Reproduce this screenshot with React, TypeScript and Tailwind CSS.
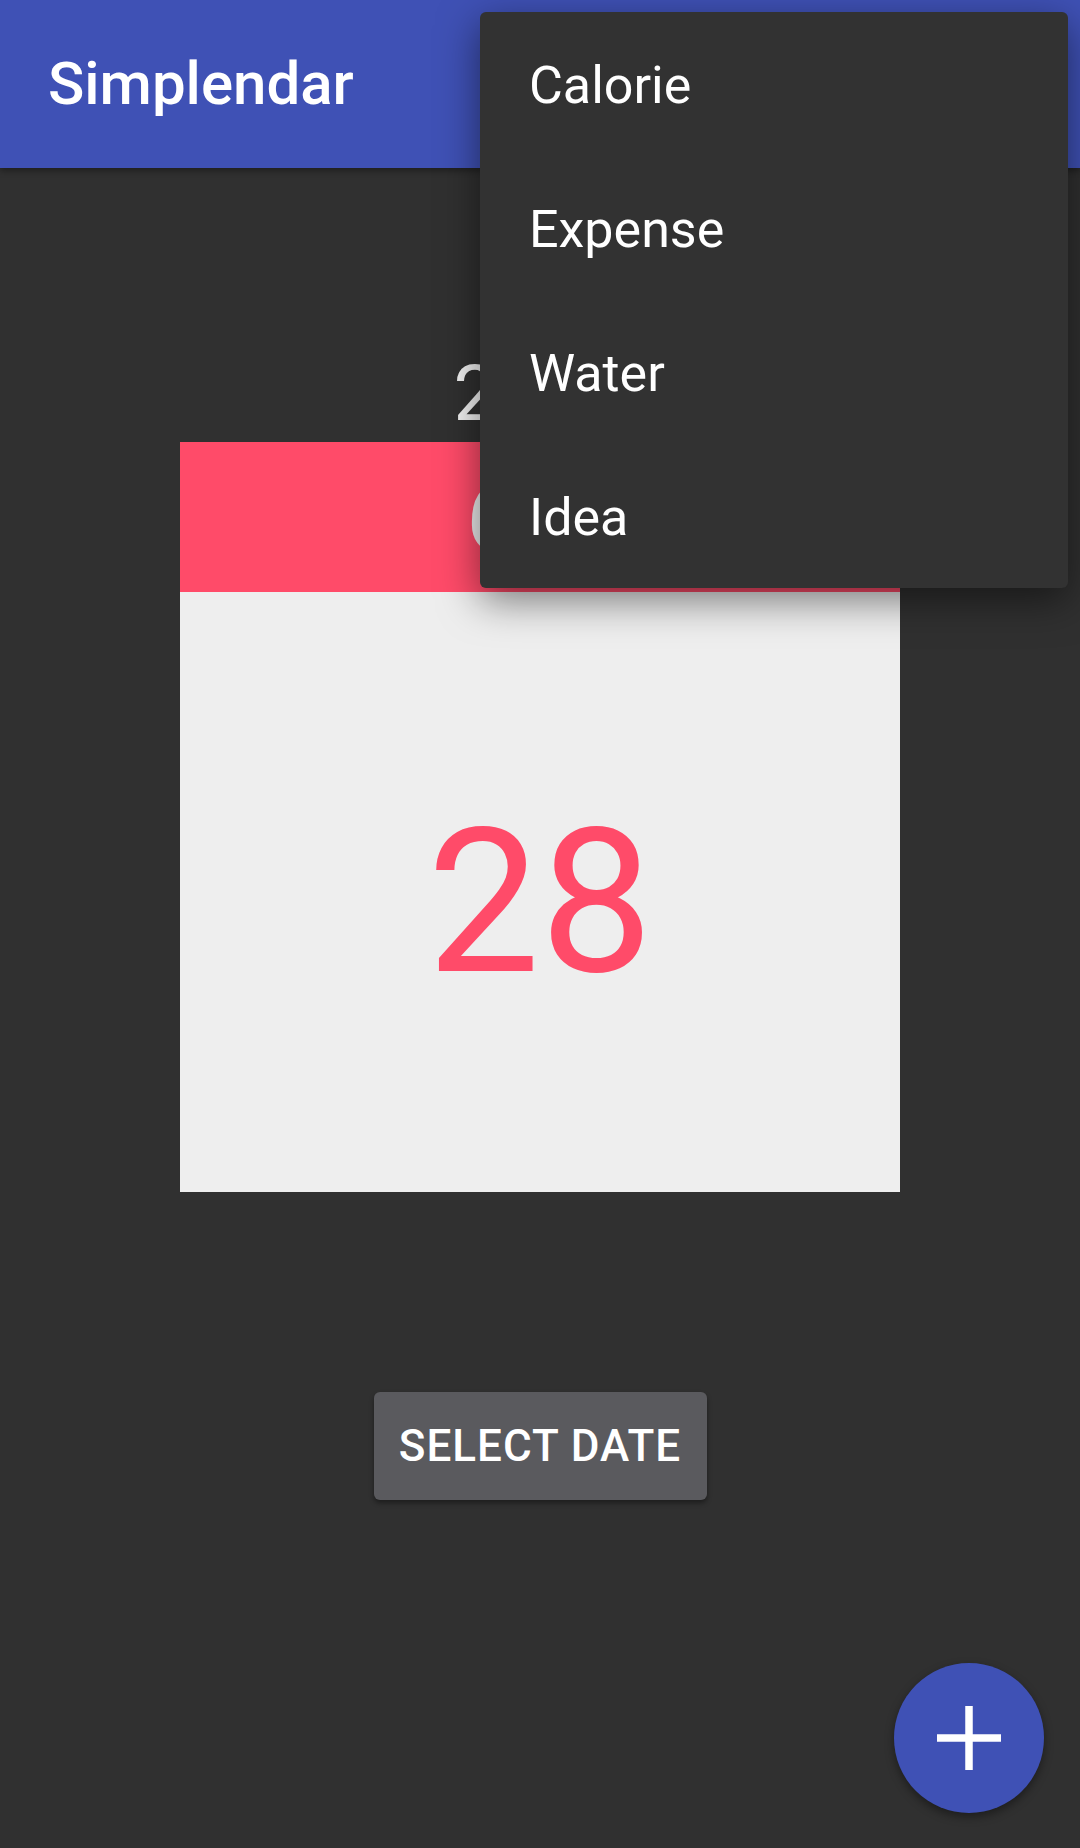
import React from 'react';

const menuItems = ['Calorie', 'Expense', 'Water', 'Idea'];

const PlusIcon: React.FC = () => (
  <svg width="66" height="66" viewBox="0 0 66 66" fill="none">
    <path d="M33 1v64M1 33h64" stroke="#ffffff" strokeWidth="7.5" />
  </svg>
);

const App: React.FC = () => {
  return (
    <div className="relative min-h-[1848px] w-[1080px] overflow-hidden bg-[#303030] font-['Roboto','Noto_Sans',sans-serif]">
      {/* app bar */}
      <header className="flex h-[168px] items-center bg-[#3F51B5] pl-[48px] shadow-[0_3px_6px_rgba(0,0,0,0.35)]">
        <h1 className="text-[60px] font-medium leading-none text-white">Simplendar</h1>
      </header>

      <main className="flex flex-col items-center">
        <div className="mt-[188px] h-[76px] text-[77px] leading-none text-[#f2f2f2]">2018</div>

        <div className="mt-[10px] w-[720px]">
          <div className="flex h-[150px] items-center justify-center bg-[#FF4B69]">
            <span className="text-[95px] leading-none text-[#eeeeee] font-['Roboto','Noto_Sans_CJK_SC',sans-serif]">6月</span>
          </div>
          <div className="flex h-[600px] items-center justify-center bg-[#EEEEEE]">
            <span className="pt-[20px] text-[201px] leading-none text-[#FF4B69]">28</span>
          </div>
        </div>

        <button className="mt-[200px] flex h-[108px] w-[333px] items-center justify-center rounded-[6px] bg-[#5A5A5E] text-[44px] font-medium leading-none tracking-[1px] text-white shadow-[0_3px_5px_rgba(0,0,0,0.4)]">
          SELECT DATE
        </button>
      </main>

      {/* floating action button */}
      <div className="absolute left-[894px] top-[1663px] flex h-[150px] w-[150px] items-center justify-center rounded-full bg-[#3F51B5] shadow-[0_4px_10px_rgba(0,0,0,0.4)]">
        <PlusIcon />
      </div>

      {/* overflow menu */}
      <div className="absolute left-[480px] top-[12px] w-[588px] rounded-[6px] bg-[#323232] shadow-[0_12px_40px_rgba(0,0,0,0.5)]">
        {menuItems.map(item => (
          <div key={item} className="flex h-[144px] items-center pl-[49px] pt-[3px] text-[52px] leading-none text-white">
            {item}
          </div>
        ))}
      </div>
    </div>
  );
};

export default App;
